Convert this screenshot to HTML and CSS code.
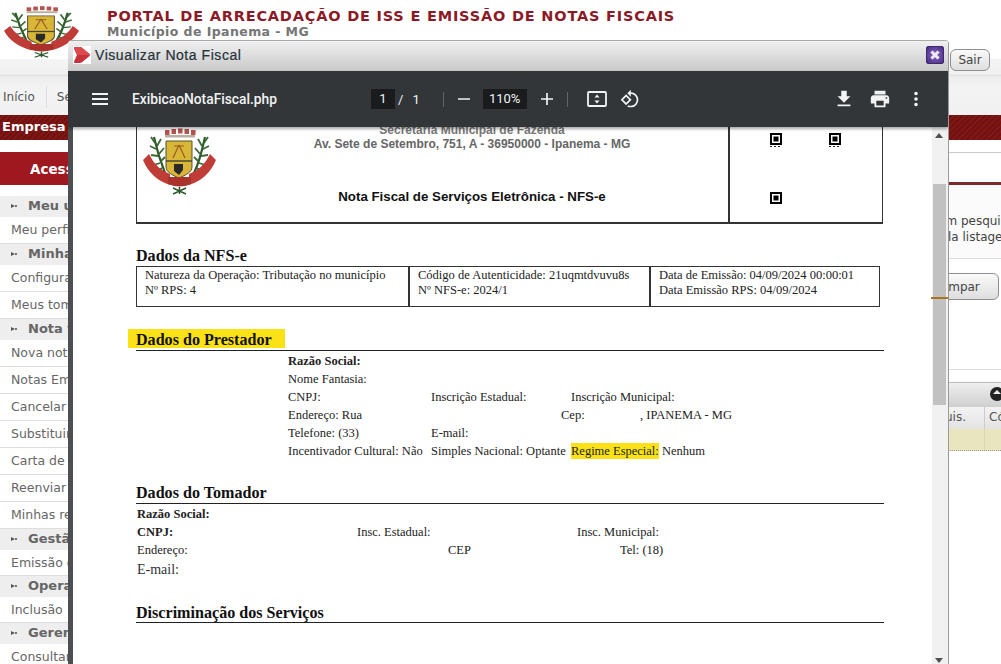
FILE: index.html
```html
<!DOCTYPE html>
<html lang="pt-BR">
<head>
<meta charset="utf-8">
<title>Portal de Arrecadação de ISS</title>
<link rel="stylesheet" href="styles.css">
</head>
<body>
<svg class="defs" width="0" height="0" aria-hidden="true">
  <symbol id="brasao" viewBox="0 0 73 68" preserveAspectRatio="none">
    <g fill="#b5534f"><rect x="22" y="3" width="4.500" height="5"/><rect x="28.500" y="2" width="4.500" height="5"/><rect x="35" y="1.500" width="4.500" height="5"/><rect x="41.500" y="2" width="4.500" height="5"/><rect x="48" y="3" width="4.500" height="5"/></g>
    <path d="M22 8h30v2.500H22z" fill="#b9b0a0"/>
    <g fill="none" stroke="#2f5a2c" stroke-width="2.200"><path d="M22 46C18 36 14 24 11 10"/><path d="M51 46C56 36 59 24 62 10"/></g>
    <g fill="none" stroke="#3b6a35" stroke-width="1.800"><path d="M12 16l-4-6M13 22l-6-3M15 29l-7-1M17 36l-6 2M19 41l-5 4M14 19l4-7M16 27l5-6M18 34l4-4M61 16l4-6M60 22l6-3M58 29l7-1M56 36l6 2M54 41l5 4M59 19l-4-7M57 27l-5-6M55 34l-4-4"/></g>
    <path d="M23 14h26v26c0 5-6 8-13 11-7-3-13-6-13-11z" fill="#d8b638" stroke="#55502c" stroke-width="1"/>
    <path d="M23 34h26" stroke="#4a4a30" stroke-width="1.600"/>
    <path d="M36 18l-6 13M36 18l6 13M31 19h10" stroke="#9a5a22" stroke-width="1.200" fill="none"/>
    <path d="M31 37h9v6l-4 5-5-4z" fill="#2a2a2a"/>
    <g fill="#bf3d36"><path d="M0 33L6 27Q13 42 27 47L27 58Q8 52 0 33Z"/><path d="M73 33L67 27Q60 42 46 47L46 58Q65 52 73 33Z"/></g>
    <path d="M25 50h23v7q-11 5-23 0z" fill="#a9322d"/>
    <path d="M30 67l13-6M43 67l-13-6M36.500 60v7" stroke="#2f5a2c" stroke-width="1.500" fill="none"/>
  </symbol>
</svg>

<div class="site">
  <header class="site-head">
    <div class="site-logo"><svg class="logo-top"><use href="#brasao"/></svg></div>
    <div class="site-titles">
      <div class="site-title">PORTAL DE ARRECADAÇÃO DE ISS E EMISSÃO DE NOTAS FISCAIS</div>
      <div class="site-sub">Município de Ipanema - MG</div>
    </div>
    <button class="btn btn-sair">Sair</button>
  </header>
  <nav class="site-nav">
    <span class="nav-item">Início</span>
    <span class="nav-item">Serviços</span>
  </nav>
  <div class="site-bar">Empresa</div>
  <div class="site-body">
    <aside class="side">
      <div class="side-acesso">Acesso rápido</div>
      <div class="side-h">Meu usuário</div>
      <div class="side-i">Meu perfil</div>
      <div class="side-h">Minha empresa</div>
      <div class="side-i">Configurações</div>
      <div class="side-i">Meus tomadores</div>
      <div class="side-h">Nota fiscal</div>
      <div class="side-i">Nova nota</div>
      <div class="side-i">Notas Emitidas</div>
      <div class="side-i">Cancelar nota</div>
      <div class="side-i">Substituir nota</div>
      <div class="side-i">Carta de correção</div>
      <div class="side-i">Reenviar nota</div>
      <div class="side-i">Minhas remessas</div>
      <div class="side-h">Gestão</div>
      <div class="side-i side-i-s">Emissão de guia</div>
      <div class="side-h">Operações</div>
      <div class="side-i side-i-s">Inclusão</div>
      <div class="side-h">Gerenciar</div>
      <div class="side-i">Consultar</div>
    </aside>
    <main class="main">
      <div class="tabs"></div>
      <div class="info">
        <div>em pesquisa</div>
        <div class="info-2">la listagem</div>
      </div>
      <div class="actions"><button class="btn btn-limpar">Limpar</button></div>
      <div class="grid-wrap">
        <div class="grid-title"><span class="grid-toggle"></span></div>
        <div class="grid-cols"><span class="col-a">Aquis.</span><span class="col-b">Cód</span></div>
        <div class="grid-row"><span class="cell-a"></span><span class="cell-b"></span></div>
      </div>
    </main>
  </div>
</div>

<section class="dialog">
  <div class="dlg-title">
    <svg class="dlg-icon" viewBox="0 0 18 18"><rect width="18" height="18" fill="#fff"/><path d="M2 1h5q1 0 2 .8l7.500 6.200q1 1 0 2L9 16.200q-1 .8-2 .8H2q-1.500 0-1-1.500L4 9 1 2.500Q.5 1 2 1z" fill="#c8323a"/><path d="M2 1h5q1 0 2 .8l7.500 6.200q.6.6.4 1H4L1 2.500Q.5 1 2 1z" fill="#dc4a50"/></svg>
    <span class="dlg-name">Visualizar Nota Fiscal</span>
    <span class="dlg-close"><svg viewBox="0 0 18 18"><path d="M5 5l8 8M13 5l-8 8" stroke="#f1edf8" stroke-width="3.400"/></svg></span>
  </div>
  <div class="pdf-bar">
    <div class="pdf-left">
      <svg class="ic ic-menu" viewBox="0 0 16 12"><path d="M0 1h16M0 6h16M0 11h16" stroke="#f1f3f4" stroke-width="2"/></svg>
      <span class="pdf-name">ExibicaoNotaFiscal.php</span>
    </div>
    <div class="pdf-center">
      <span class="pdf-box pdf-page">1</span>
      <span class="pdf-of">/</span><span class="pdf-of pdf-total">1</span>
      <span class="pdf-sep sep-1"></span>
      <svg class="ic ic-zoom" viewBox="0 0 12 12"><path d="M0 6h12" stroke="#f1f3f4" stroke-width="1.700"/></svg>
      <span class="pdf-box pdf-zoom">110%</span>
      <svg class="ic ic-zoom" viewBox="0 0 12 12"><path d="M0 6h12M6 0v12" stroke="#f1f3f4" stroke-width="1.700"/></svg>
      <span class="pdf-sep sep-2"></span>
      <svg class="ic ic-fit" viewBox="0 0 20 16"><rect x="1" y="1" width="18" height="14" rx="1" fill="none" stroke="#f1f3f4" stroke-width="1.800"/><path d="M10 3.500l2.500 3h-5zM10 12.500l-2.500-3h5z" fill="#f1f3f4"/></svg>
      <svg class="ic ic-rot" viewBox="0 0 24 24"><path fill="#f1f3f4" d="M7.340 6.410L.86 12.900l6.490 6.480 6.490-6.480-6.500-6.490zM3.690 12.900l3.660-3.660L11 12.900l-3.660 3.660-3.650-3.660zm15.670-6.260C17.610 4.880 15.300 4 13 4V.76L8.760 5 13 9.240V6c1.790 0 3.580.68 4.950 2.050 2.730 2.730 2.730 7.170 0 9.900C16.580 19.320 14.790 20 13 20c-.97 0-1.940-.21-2.840-.61l-1.490 1.490C10.020 21.620 11.510 22 13 22c2.300 0 4.610-.88 6.360-2.640 3.520-3.510 3.520-9.210 0-12.720z"/></svg>
    </div>
    <div class="pdf-right">
      <svg class="ic ic-act" viewBox="0 0 24 24"><path fill="#f1f3f4" d="M19 9h-4V3H9v6H5l7 7 7-7zM5 18v2h14v-2H5z"/></svg>
      <svg class="ic ic-act" viewBox="0 0 24 24"><path fill="#f1f3f4" d="M19 8H5c-1.660 0-3 1.340-3 3v6h4v4h12v-4h4v-6c0-1.660-1.340-3-3-3zm-3 11H8v-5h8v5zm3-7c-.55 0-1-.45-1-1s.45-1 1-1 1 .45 1 1-.45 1-1 1zm-1-9H6v4h12V3z"/></svg>
      <svg class="ic ic-act" viewBox="0 0 24 24"><path fill="#f1f3f4" d="M12 8a2 2 0 100-4 2 2 0 000 4zm0 2a2 2 0 100 4 2 2 0 000-4zm0 6a2 2 0 100 4 2 2 0 000-4z"/></svg>
    </div>
  </div>
  <div class="viewer">
    <div class="sheet">
      <div class="nf-top">
        <div class="nf-top-l">
          <svg class="logo-doc"><use href="#brasao"/></svg>
          <div class="nf-org">
            <div class="org-1">Secretaria Municipal de Fazenda</div>
            <div class="org-2">Av. Sete de Setembro, 751, A - 36950000 - Ipanema - MG</div>
            <div class="org-3">Nota Fiscal de Serviços Eletrônica - NFS-e</div>
          </div>
        </div>
        <div class="nf-top-r">
          <div class="qr-row"><span class="qr qr-d"></span><span class="qr qr-d"></span></div>
          <div class="qr-row qr-row-2"><span class="qr"></span></div>
        </div>
      </div>

      <h2 class="sec sec-nfse">Dados da NFS-e</h2>
      <div class="nf-cells">
        <div>Natureza da Operação: Tributação no município<br>Nº RPS: 4</div>
        <div>Código de Autenticidade: 21uqmtdvuvu8s<br>Nº NFS-e: 2024/1</div>
        <div>Data de Emissão: 04/09/2024 00:00:01<br>Data Emissão RPS: 04/09/2024</div>
      </div>

      <h2 class="sec sec-prest"><span class="mark">Dados do Prestador</span></h2>
      <div class="prest">
        <div class="f-row"><b>Razão Social:</b></div>
        <div class="f-row">Nome Fantasia:</div>
        <div class="f-row f-3"><span>CNPJ:</span><span>Inscrição Estadual:</span><span>Inscrição Municipal:</span></div>
        <div class="f-row f-end"><span>Endereço: Rua</span><span>Cep:</span><span>, IPANEMA - MG</span></div>
        <div class="f-row f-3"><span>Telefone: (33)</span><span>E-mail:</span></div>
        <div class="f-row f-3"><span>Incentivador Cultural: Não</span><span>Simples Nacional: Optante</span><span><span class="mark-sm">Regime Especial:</span> Nenhum</span></div>
      </div>

      <h2 class="sec sec-tom">Dados do Tomador</h2>
      <div class="tom">
        <div class="t-row"><b>Razão Social:</b></div>
        <div class="t-row t-3"><b class="t-big">CNPJ:</b><span>Insc. Estadual:</span><span>Insc. Municipal:</span></div>
        <div class="t-row t-end"><span>Endereço:</span><span>CEP</span><span>Tel: (18)</span></div>
        <div class="t-row t-mail">E-mail:</div>
      </div>

      <h2 class="sec sec-disc">Discriminação dos Serviços</h2>
    </div>
    <div class="scroll">
      <span class="sc-up"></span>
      <span class="sc-thumb"></span>
      <span class="sc-mark"></span>
      <span class="sc-down"></span>
    </div>
  </div>
</section>
</body>
</html>
```

FILE: styles.css
```css
* { box-sizing: border-box; }
html, body { margin: 0; padding: 0; }
body {
  width: 1001px;
  height: 664px;
  overflow: hidden;
  position: relative;
  background: #fff;
  font-family: "DejaVu Sans", "Liberation Sans", sans-serif;
  color: #555;
}
.defs { position: absolute; }

/* site behind the dialog */
.site { width: 1001px; height: 664px; overflow: hidden; }
.site-head {
  height: 76px;
  display: flex;
  background: linear-gradient(#fff 0, #fff 58px, #f4f4f4 59px, #f1f1f1 74px, #ddd 76px);
}
.site-logo { width: 80px; height: 59px; padding: 5px 0 0 4px; background: #fff; flex: none; }
.logo-top { display: block; width: 75px; height: 53px; }
.site-titles { padding: 7px 0 0 27px; flex: 1; }
.site-title { font-size: 14.500px; font-weight: 700; letter-spacing: .8px; color: #8b1a26; line-height: 18px; white-space: nowrap; }
.site-sub { font-size: 12.500px; font-weight: 700; color: #757575; line-height: 14px; letter-spacing: .42px; white-space: nowrap; }
.btn {
  font-family: "DejaVu Sans", sans-serif;
  font-size: 12px;
  color: #444;
  border: 1px solid #8f8f8f;
  border-radius: 6px;
  background: linear-gradient(#fafafa, #dedede);
  padding: 0;
}
.btn-sair { flex: none; width: 40px; height: 22px; margin: 49px 11px 0 0; }
.site-nav {
  height: 39px;
  background: linear-gradient(#ececec, #f3f3f3 30%, #f1f1f1);
  display: flex;
  align-items: center;
  font-size: 12px;
  color: #555;
  padding: 3px 0 0 3px;
}
.nav-item { padding-right: 11px; margin-right: 10px; border-right: 1px solid #ddd; line-height: 22px; }
.site-bar {
  height: 25px;
  background: repeating-linear-gradient(135deg, #721110 0 2px, #7e1816 2px 4px);
  color: #fff;
  font-size: 13px;
  font-weight: 700;
  line-height: 24px;
  padding-left: 2px;
}
.site-body { display: flex; height: 524px; }
.side { width: 200px; flex: none; padding-top: 12px; }
.side-acesso {
  height: 33px;
  background: #a0181f;
  color: #fff;
  font-weight: 700;
  font-size: 13.500px;
  line-height: 34px;
  padding-left: 30px;
  margin-bottom: 11px;
}
.side-h {
  height: 21px;
  background: #eee;
  font-size: 13px;
  font-weight: 700;
  line-height: 20px;
  padding-left: 28px;
  color: #666;
  position: relative;
}
.side-h::before {
  content: "";
  position: absolute;
  left: 11px;
  top: 8px;
  border-left: 4px solid #555;
  border-top: 2.500px solid transparent;
  border-bottom: 2.500px solid transparent;
  box-shadow: 3px 0 0 -1px #777;
}
.side-i {
  height: 27px;
  border-bottom: 1px solid #ddd;
  font-size: 12.500px;
  line-height: 25px;
  padding-left: 11px;
  color: #666;
  white-space: nowrap;
}
.side-i-s { height: 26px; }
.side-h + .side-i:last-child { border-bottom: 0; }
.main { flex: 1; overflow: hidden; min-width: 0; }
.tabs { height: 33px; margin-top: 12px; border-top: 1px solid #ccc; border-bottom: 3px solid #7d2a2e; background: #fff; margin-left: 0; }
.info {
  height: 74px;
  border-bottom: 1px solid #ddd;
  background: #fbfbfb;
  padding: 28px 0 0 738px;
  font-size: 12px;
  line-height: 16px;
  color: #444;
  white-space: nowrap;
}
.info-2 { padding-left: 10px; }
.actions { height: 111px; border-bottom: 1px solid #ddd; padding: 14px 2px 0 0; display: flex; justify-content: flex-end; background: #fff; align-items: flex-start; }
.btn-limpar { width: 80px; height: 27px; font-size: 12px; }
.grid-wrap { margin-top: 12px; font-size: 12px; }
.grid-title { height: 25px; border-top: 1px solid #bbb; background: linear-gradient(#efefef, #cfcfcf); display: flex; justify-content: flex-end; padding: 4px 0 0; }
.grid-toggle { width: 14px; height: 14px; border-radius: 50%; background: #222; margin-right: -3px; position: relative; }
.grid-toggle::after {
  content: "";
  position: absolute;
  left: 3px;
  top: 3px;
  border-left: 4px solid transparent;
  border-right: 4px solid transparent;
  border-bottom: 4px solid #eee;
}
.grid-cols { height: 22px; background: linear-gradient(#f3f3f3, #e3e3e3); display: grid; grid-template-columns: 1fr 16px; line-height: 21px; }
.col-a { text-align: right; padding-right: 18px; border-right: 1px solid #ccc; }
.col-b { padding-left: 4px; overflow: hidden; }
.grid-row { height: 22px; background: #e9e5bf; border-bottom: 1px dotted #999; display: grid; grid-template-columns: 1fr 16px; }
.cell-a { border-right: 1px solid #ddd8b0; }

/* dialog */
.dialog {
  position: absolute;
  left: 68px;
  top: 40px;
  width: 881px;
  height: 624px;
  display: flex;
  flex-direction: column;
  border-right: 1px solid #9a9a9a;
  border-radius: 4px 4px 0 0;
  overflow: hidden;
}
.dlg-title {
  height: 31px;
  flex: none;
  display: flex;
  align-items: center;
  background: linear-gradient(#f0f0f0, #c9c9c9);
  border-top: 1px solid #aaa;
  padding: 0 4px 2px 5px;
}
.dlg-icon { width: 18px; height: 18px; flex: none; }
.dlg-name { font-family: "Liberation Sans", Arial, sans-serif; font-size: 14px; letter-spacing: .55px; color: #263238; margin-left: 4px; flex: 1; -webkit-text-stroke: .2px #263238; }
.dlg-close {
  width: 18px; height: 18px; flex: none;
  border-radius: 2px;
  background: radial-gradient(circle at 50% 50%, #8a68c0, #4a2b86);
  border: 1px solid #3e2a6a;
  display: block;
  margin-right: 0;
}
.dlg-close svg { display: block; width: 16px; height: 16px; }
.pdf-bar {
  height: 56px;
  flex: none;
  background: #323639;
  color: #f1f3f4;
  font-family: Roboto, "Liberation Sans", sans-serif;
  display: flex;
  align-items: center;
  box-shadow: 0 2px 3px rgba(0,0,0,.35);
  position: relative;
  z-index: 2;
}
.ic { display: block; flex: none; }
.pdf-left { width: 303px; display: flex; align-items: center; padding-left: 24px; flex: none; }
.ic-menu { width: 16px; height: 12px; }
.pdf-name { margin-left: 24px; font-size: 13.800px; font-weight: 500; white-space: nowrap; }
.pdf-center { display: flex; align-items: center; flex: none; font-size: 13px; }
.pdf-box { background: #191b1c; height: 20px; line-height: 20px; text-align: center; display: block; }
.pdf-page { width: 24px; }
.pdf-of { margin-left: 3px; }
.pdf-of.pdf-total { margin-left: 9px; }
.pdf-sep { width: 1px; height: 15px; background: #5f6368; display: block; }
.sep-1 { margin: 0 14px 0 23px; }
.sep-2 { margin: 0 19px 0 14px; }
.ic-zoom { width: 12px; height: 12px; }
.pdf-zoom { width: 44px; margin: 0 14px 0 13px; }
.ic-fit { width: 20px; height: 16px; }
.ic-rot { width: 20px; height: 20px; margin-left: 13px; }
.pdf-right { margin-left: auto; display: flex; align-items: center; gap: 14px; padding-right: 21px; }
.ic-act { width: 22px; height: 22px; }

.viewer { flex: 1; min-height: 0; display: flex; background: #fff; border-left: 5px solid #4c5053; }
.sheet { flex: 1; min-width: 0; overflow: hidden; padding-left: 63px; background: #fff; font-family: "Liberation Serif", "Times New Roman", serif; color: #222; font-size: 12.500px; }
.nf-top {
  width: 747px;
  height: 97px;
  border: 1px solid #333;
  border-top: 0;
  border-bottom-width: 2px;
  display: flex;
}
.nf-top-l { flex: 1; display: flex; border-right: 2px solid #333; }
.logo-doc { width: 73px; height: 68px; margin-left: 6px; flex: none; }
.nf-org { flex: 1; font-family: "Liberation Sans", Arial, sans-serif; font-weight: 700; text-align: center; font-size: 12px; margin-top: -4px; }
.org-1 { line-height: 14px; color: #777; }
.org-2 { line-height: 14px; color: #666; }
.org-3 { line-height: 16px; margin-top: 38px; color: #111; font-size: 13.300px; }
.nf-top-r { width: 152px; flex: none; padding: 6px 0 0 40px; }
.qr-row { display: flex; gap: 47px; }
.qr-row-2 { margin-top: 47px; }
.qr { width: 12px; height: 12px; background: #000; border: 2px solid #000; display: block; box-shadow: inset 0 0 0 1.500px #fff; position: relative; }
.qr-d::after {
  content: "";
  position: absolute;
  left: -2px;
  right: -2px;
  top: 11px;
  height: 1px;
  background: repeating-linear-gradient(90deg, #222 0 2px, transparent 2px 4px);
}
.sec { margin: 0; font-size: 16.100px; font-weight: 700; line-height: 18px; color: #111; font-family: "Liberation Serif", serif; }
.sec-nfse { margin-top: 23px; }
.nf-cells {
  width: 744px;
  height: 41px;
  border: 1px solid #333;
  display: grid;
  grid-template-columns: 271px 241px 1fr;
  line-height: 15px;
  margin-top: 1px;
}
.nf-cells > div { padding: 1px 0 0 8px; white-space: nowrap; }
.nf-cells > div + div { border-left: 2px solid #333; }
.sec-prest { margin-top: 22px; height: 22px; border-bottom: 1px solid #222; width: 748px; line-height: 21px; }
.mark { display: block; background: #fbe216; width: 157px; margin-left: -8px; padding-left: 8px; height: 19px; }
.prest { padding-left: 152px; margin-top: 1px; }
.f-row { height: 18px; line-height: 18px; white-space: nowrap; }
.f-3 { display: grid; grid-template-columns: 143px 140px 1fr; }
.f-end { display: grid; grid-template-columns: 273px 79px 1fr; }
.mark-sm { background: #fbe216; padding: 1px 0; }
.sec-tom { margin-top: 23px; height: 21px; border-bottom: 1px solid #222; width: 748px; line-height: 20px; }
.tom { padding-left: 1px; margin-top: 1px; }
.t-row { height: 18px; line-height: 18px; white-space: nowrap; }
.t-3 { display: grid; grid-template-columns: 220px 220px 1fr; }
.t-big { font-size: 12.500px; }
.t-end { display: grid; grid-template-columns: 311px 172px 1fr; }
.t-row.t-mail { font-size: 14px; color: #333; height: 22px; line-height: 22px; }
.sec-disc { margin-top: 23px; height: 19px; border-bottom: 1px solid #222; width: 748px; line-height: 18px; }

.scroll { width: 16px; flex: none; background: #f1f1f1; position: relative; }
.sc-thumb { position: absolute; left: 1px; right: 2px; top: 57px; height: 221px; background: #c1c1c1; }
.sc-mark { position: absolute; left: -1px; right: 0; top: 170px; height: 2px; background: #a5781e; }
.sc-up, .sc-down { position: absolute; left: 3px; border-left: 4px solid transparent; border-right: 4px solid transparent; }
.sc-up { top: 6px; border-bottom: 5px solid #505050; }
.sc-down { bottom: 1px; border-top: 5px solid #505050; }
```
